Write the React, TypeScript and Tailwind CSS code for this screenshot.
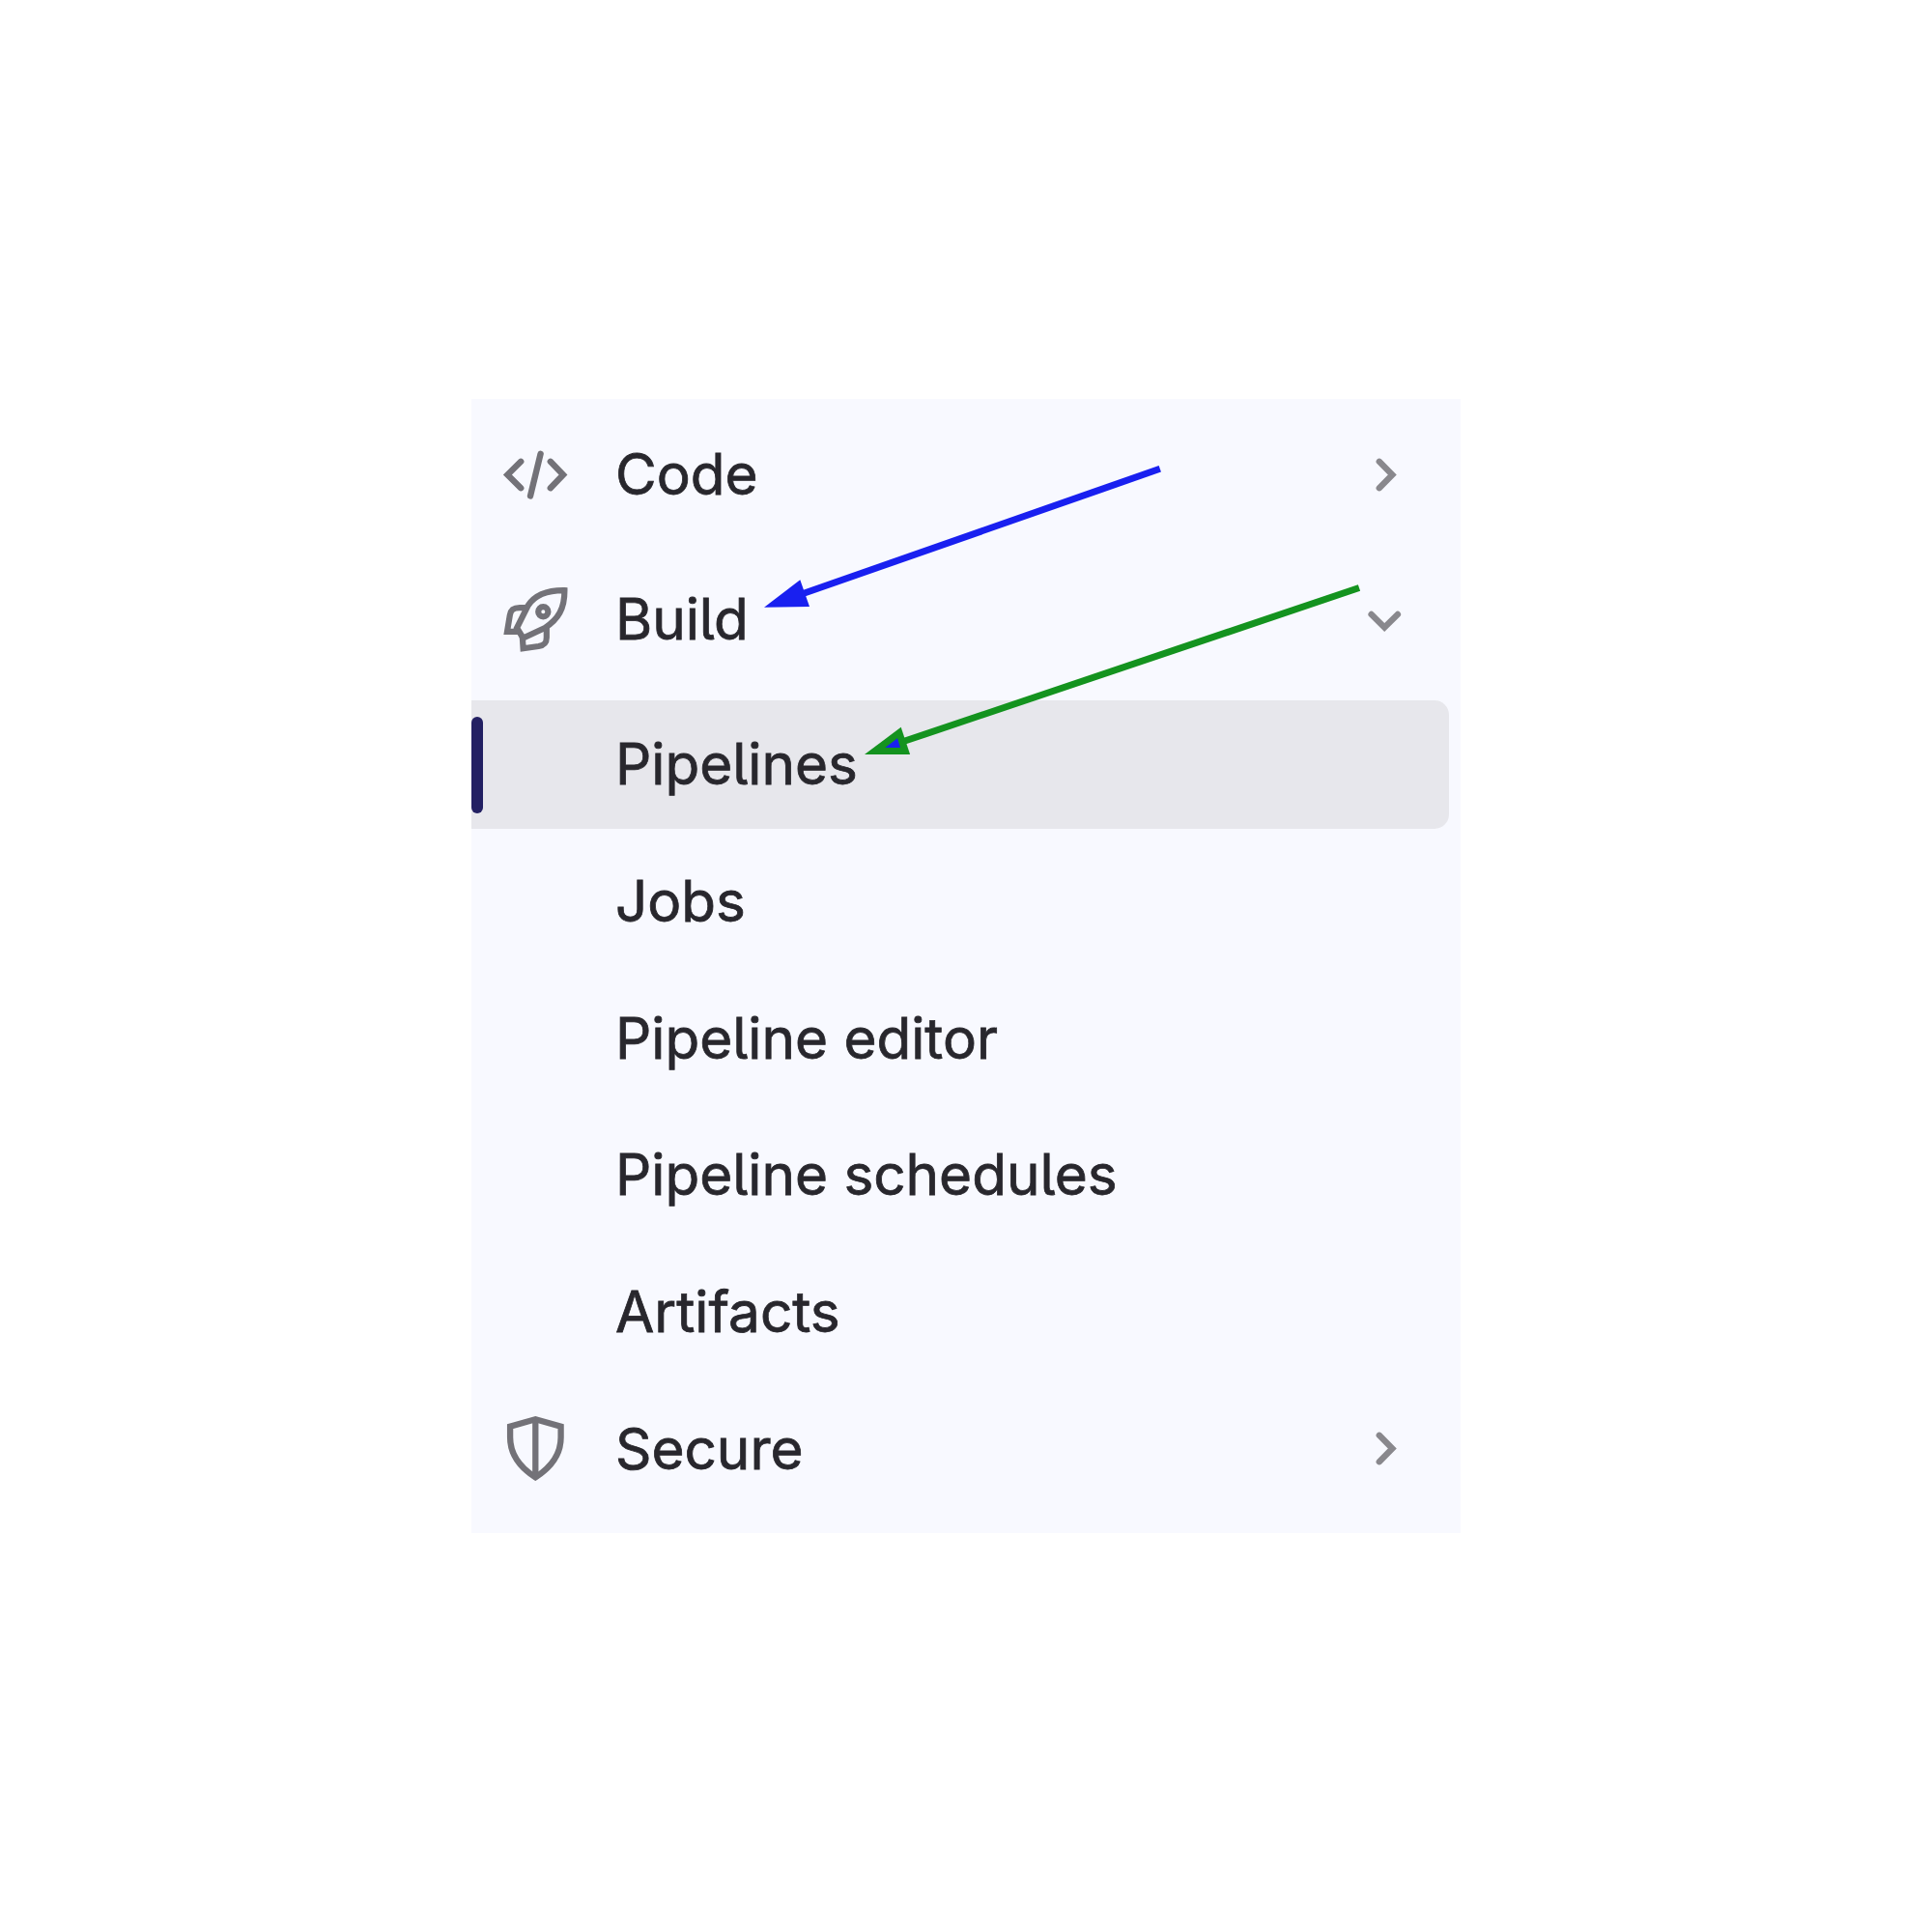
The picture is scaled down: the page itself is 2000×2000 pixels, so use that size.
import type { ReactNode } from "react";

const CodeIcon = () => (
  <svg className="h-[68px] w-[68px]" viewBox="520 457 68 68" fill="none" stroke="currentColor" strokeWidth="6.4" strokeLinecap="round">
    <path d="M539.2 477.8 525.4 491.5l13.8 13.7M569.8 477.8 583 491.5l-13.2 13.7M559.6 469.8 549 513.5" />
  </svg>
);

const RocketIcon = () => (
  <svg className="h-[68px] w-[68px]" viewBox="520 607 68 68" fill="none" stroke="currentColor" strokeWidth="6.2">
    <path d="M584.4 611.2C570 611 555 614 546.5 627L535 650L541.5 660.5L564 650C578 641 584.5 630 584.4 611.2Z" />
    <path d="M547 629.2H538C531 629.2 528.6 631.5 527.8 637L525 653.8H536.5" />
    <path d="M565.8 649V660C565.8 666 563 668 557.5 669L541.6 671.2L540.8 659" />
    <circle cx="562.3" cy="633.2" r="5.1" />
  </svg>
);

const ShieldIcon = () => (
  <svg className="h-[68px] w-[68px]" viewBox="520 1465 68 68" fill="none" stroke="currentColor" strokeWidth="6.3">
    <path d="M554.3 1469.2 528.1 1476.7V1488C528.1 1507 539 1519.5 554.3 1529.3C569.6 1519.5 580.6 1507 580.6 1488V1476.7Z" />
    <path d="M554.3 1469V1529" />
  </svg>
);

const ChevronRight = () => (
  <svg className="h-[68px] w-[68px]" viewBox="1399 457 68 68" fill="none" stroke="currentColor" strokeWidth="6.4" strokeLinecap="round">
    <path d="M1427.8 477.8 1441.3 491.5l-13.5 13.7" />
  </svg>
);

const ChevronDown = () => (
  <svg className="h-[68px] w-[68px]" viewBox="1399 607 68 68" fill="none" stroke="currentColor" strokeWidth="6.4" strokeLinecap="round">
    <path d="M1419.6 636 1433.2 649.5l13.7-13.5" />
  </svg>
);

function Label({ children }: { children: string }) {
  return <span className="pt-px whitespace-nowrap [-webkit-text-stroke:0.8px_#28272d]">{children}</span>;
}

function Section({ icon, chevron, children }: { icon: ReactNode; chevron: ReactNode; children: ReactNode }) {
  return (
    <div className="flex h-[133px] items-center pr-[33px] pl-8">
      <span className="w-[117px] shrink-0 text-[#737278]">{icon}</span>
      {children}
      <span className="ml-auto text-[#89888d]">{chevron}</span>
    </div>
  );
}

function SubItem({ active = false, children }: { active?: boolean; children: ReactNode }) {
  return (
    <div className={`flex h-[133px] items-center ${active ? "rounded-r-[15px] bg-[#e7e7ec]" : ""}`}>
      <span className="flex w-[149px] shrink-0">
        {active && <span className="mt-px h-[100px] w-3 rounded-full bg-[#232063]" />}
      </span>
      {children}
    </div>
  );
}

export default function App() {
  return (
    <main className="relative flex h-[2000px] w-[2000px] items-center justify-center bg-white">
      <nav className="h-[1174px] w-[1024px] bg-[#f8f9ff] pt-[11.5px] pr-3 font-['Inter',sans-serif] text-[58.4px] leading-none text-[#28272d] [font-feature-settings:'cv05']">
        <div className="flex flex-col gap-[17px]">
          <Section icon={<CodeIcon />} chevron={<ChevronRight />}>
            <Label>Code</Label>
          </Section>
          <Section icon={<RocketIcon />} chevron={<ChevronDown />}>
            <Label>Build</Label>
          </Section>
          <div className="flex flex-col gap-[8.7px]">
            <SubItem active>
              <Label>Pipelines</Label>
            </SubItem>
            <SubItem>
              <Label>Jobs</Label>
            </SubItem>
            <SubItem>
              <Label>Pipeline editor</Label>
            </SubItem>
            <SubItem>
              <Label>Pipeline schedules</Label>
            </SubItem>
            <SubItem>
              <Label>Artifacts</Label>
            </SubItem>
            <Section icon={<ShieldIcon />} chevron={<ChevronRight />}>
              <Label>Secure</Label>
            </Section>
          </div>
        </div>
      </nav>
      <svg className="pointer-events-none absolute top-0 left-0 h-[2000px] w-[2000px]" viewBox="0 0 2000 2000">
        <path d="M1200.8 485.3 832 614.2" stroke="#1920f0" strokeWidth="7" />
        <path d="M791 628.8 828.3 600.3 838 627.9Z" fill="#1920f0" />
        <path d="M1407 608.5 936 767.3" stroke="#14931f" strokeWidth="7" />
        <path d="M895 781 932.7 752.8 942.1 781Z" fill="#14931f" />
        <path d="M916.3 774 929 764.3 932 774Z" fill="#1920f0" />
      </svg>
    </main>
  );
}
